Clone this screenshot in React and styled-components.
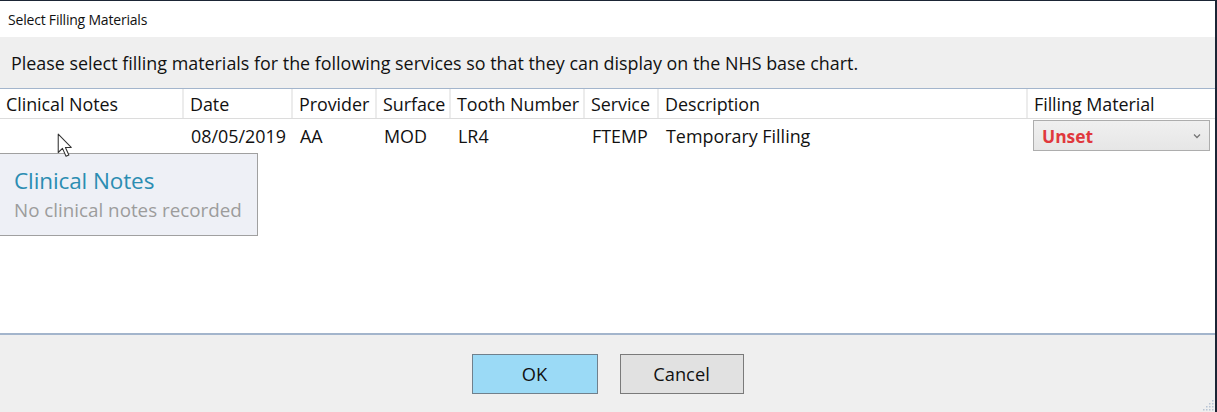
import React from 'react'
import styled, { createGlobalStyle } from 'styled-components';

const GlobalStyle = createGlobalStyle`
    html, body {
        margin: 0;
        padding: 0;
        background: #fff;
    }
    body {
        font-family: 'Open Sans', 'Noto Sans', sans-serif;
        color: #1a1a1a;
    }
`

const Window = styled.div`
    position: relative;
    width: 1217px;
    height: 412px;
    box-sizing: border-box;
    border-top: 1px solid #1b2535;
    border-right: 2px solid #1b2535;
    display: flex;
    flex-direction: column;
    overflow: hidden;
`

const TitleBar = styled.div`
    height: 36px;
    display: flex;
    align-items: center;
    padding-left: 8px;
    font-size: 14px;
    letter-spacing: -0.2px;
    color: #111;
    background: #fff;
`

const Instructions = styled.div`
    height: 51px;
    display: flex;
    align-items: center;
    padding-left: 11px;
    background: #efefef;
    font-size: 17.9px;
    font-weight: 500;
    color: #111;
`

const Grid = styled.div`
    flex: 1;
    background: #fff;
    border-top: 1px solid #a3b5cc;
`

const Row = styled.div`
    display: grid;
    grid-template-columns: 184px 109px 84px 74px 134px 74px 369px 1fr;
    height: ${p => p.head ? '29px' : '34px'};
    border-bottom: ${p => p.head ? '1px solid #dcdcdc' : 'none'};
`

const HeadCell = styled.div`
    display: flex;
    align-items: center;
    padding-left: 6px;
    font-size: 17.9px;
    font-weight: 500;
    letter-spacing: -0.05px;
    color: #111;
    border-right: 2px solid #ececec;
    white-space: nowrap;
    overflow: hidden;
    &:last-child {
        border-right: none;
    }
`

const Cell = styled.div`
    display: flex;
    align-items: center;
    padding-left: 7px;
    font-size: 17.9px;
    font-weight: 500;
    color: #111;
    white-space: nowrap;
`

const Select = styled.div`
    margin: 1px 0 0 5px;
    width: 177px;
    height: 31px;
    box-sizing: border-box;
    border: 1px solid #adadad;
    background: linear-gradient(#f0f0f0, #e6e6e6);
    display: flex;
    align-items: center;
    justify-content: space-between;
    padding: 0 8px 0 8px;
    color: #e0383d;
    font-weight: 700;
    font-size: 17.4px;
`

const Tooltip = styled.div`
    position: absolute;
    left: 0;
    top: 152px;
    width: 258px;
    height: 83px;
    box-sizing: border-box;
    background: #eef0f6;
    border: 1px solid #a0a0a0;
    border-left: none;
    padding: 13px 0 0 14px;
    h4 {
        margin: 0;
        font-weight: 400;
        font-size: 22.5px;
        line-height: 28px;
        letter-spacing: -0.1px;
        color: #2b8db2;
    }
    p {
        margin: 3px 0 0;
        font-size: 18.8px;
        line-height: 24px;
        color: #9c9c9c;
    }
`

const Cursor = styled.svg`
    position: absolute;
    left: 57px;
    top: 132px;
`

const Footer = styled.div`
    height: 77px;
    border-top: 2px solid #a3b5cc;
    background: #efefef;
    display: flex;
    align-items: center;
    justify-content: center;
    gap: 22px;
`

const Button = styled.button`
    width: ${p => p.primary ? '126px' : '124px'};
    height: 40px;
    border: 1px solid ${p => p.primary ? '#70808c' : '#7a7a7a'};
    background: ${p => p.primary ? '#9bdaf6' : '#e1e1e1'};
    font-family: inherit;
    font-size: 18.3px;
    font-weight: 500;
    color: #111;
    padding: 0;
`

const Grip = styled.svg`
    position: absolute;
    right: 1px;
    bottom: 1px;
`

const headers = ['Clinical Notes', 'Date', 'Provider', 'Surface', 'Tooth Number', 'Service', 'Description', 'Filling Material']
const row = ['', '08/05/2019', 'AA', 'MOD', 'LR4', 'FTEMP', 'Temporary Filling']

export default function App() {
    return (
        <>
            <GlobalStyle />
            <Window>
                <TitleBar>Select Filling Materials</TitleBar>
                <Instructions>Please select filling materials for the following services so that they can display on the NHS base chart.</Instructions>
                <Grid>
                    <Row head>
                        {headers.map(h => <HeadCell key={h}>{h}</HeadCell>)}
                    </Row>
                    <Row>
                        {row.map((c, i) => <Cell key={i}>{c}</Cell>)}
                        <div>
                            <Select>
                                <span>Unset</span>
                                <svg width="8" height="6" viewBox="0 0 8 6">
                                    <path d="M1 1.5 L4 4.5 L7 1.5" fill="none" stroke="#777" strokeWidth="1.3" />
                                </svg>
                            </Select>
                        </div>
                    </Row>
                </Grid>
                <Footer>
                    <Button primary>OK</Button>
                    <Button>Cancel</Button>
                </Footer>
                <Tooltip>
                    <h4>Clinical Notes</h4>
                    <p>No clinical notes recorded</p>
                </Tooltip>
                <Cursor width="19" height="26" viewBox="0 0 16 22">
                    <path d="M1 1 L1 16.5 L4.6 13 L7.6 19.6 L10 18.6 L7.1 12.2 L12 12.2 Z" fill="#fff" stroke="#333" strokeWidth="0.9" strokeLinejoin="round" />
                </Cursor>
                <Grip width="12" height="12" viewBox="0 0 12 12">
                    {[[10, 2], [7, 5], [10, 5], [4, 8], [7, 8], [10, 8], [1, 11], [4, 11], [7, 11], [10, 11]].map(([x, y], i) => (
                        <rect key={i} x={x} y={y - 1} width="1.5" height="1.5" fill="#b8c4d4" />
                    ))}
                </Grip>
            </Window>
        </>
    )
}
